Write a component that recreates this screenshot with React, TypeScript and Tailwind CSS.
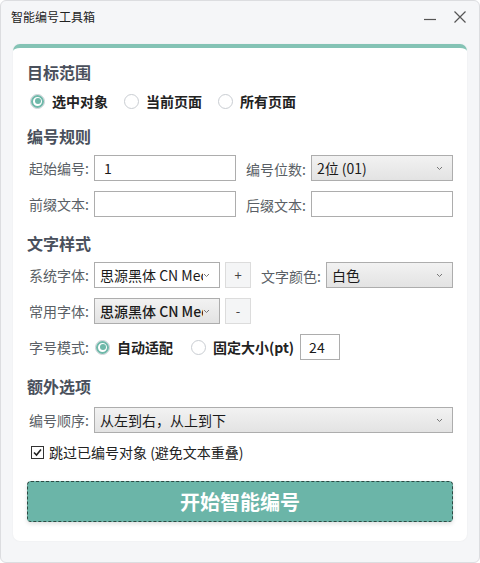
import React from "react";

const font = { fontFamily: '"Noto Sans CJK SC", "Noto Sans", sans-serif' };

function Radio({ checked }: { checked?: boolean }) {
  return (
    <span className="w-[15px] h-[15px] rounded-full border border-[#c9cdd2] bg-white flex items-center justify-center shrink-0">
      {checked && <span className="w-[13px] h-[13px] rounded-full border-[2px] border-[#6fb8a9] flex items-center justify-center"><span className="w-[6px] h-[6px] rounded-full bg-[#6fb8a9]" /></span>}
    </span>
  );
}

function Chevron() {
  return (
    <svg width="7" height="5" viewBox="0 0 7 5" className="shrink-0">
      <path d="M1 1 L3.5 3.5 L6 1" stroke="#777" strokeWidth="1" fill="none" />
    </svg>
  );
}

function Select({ text, w, gray, bold }: { text: string; w: string; gray?: boolean; bold?: boolean }) {
  return (
    <div className={`${w} h-[26px] border border-[#adadad] ${gray ? "bg-gradient-to-b from-[#f2f2f2] to-[#e3e3e3]" : "bg-white"} flex items-center pl-[5px] pr-[9px] overflow-hidden shrink-0`}>
      <span className={`flex-1 whitespace-nowrap overflow-hidden text-[14px] text-[#1a1a1a] ${bold ? "font-medium" : ""}`}>{text}</span>
      <Chevron />
    </div>
  );
}

function Label({ children }: { children: React.ReactNode }) {
  return <span className="w-[60px] text-[14px] text-[#5a5f66] whitespace-nowrap shrink-0">{children}</span>;
}

function Heading({ children }: { children: React.ReactNode }) {
  return <div className="text-[16px] font-semibold text-[#4a505c] leading-[20px]">{children}</div>;
}

function RLabel({ children }: { children: React.ReactNode }) {
  return <span className="ml-[7px] text-[14px] font-bold text-[#222] whitespace-nowrap">{children}</span>;
}

export default function App() {
  return (
    <div style={font} className="w-[480px] h-[563px] bg-white">
      <div className="w-[480px] h-[563px] bg-[#f5f6f8] border border-[#dcdde0] rounded-[6px] flex flex-col">
        <div className="h-[32px] flex items-center pl-[10px] pr-[12px]">
          <span className="text-[12px] text-[#222]">智能编号工具箱</span>
          <div className="flex-1" />
          <svg width="14" height="14" viewBox="0 0 14 14" className="mr-[16px]"><path d="M1 9.5 H13" stroke="#555" strokeWidth="1.2" /></svg>
          <svg width="14" height="14" viewBox="0 0 14 14"><path d="M1.5 1.5 L12.5 12.5 M12.5 1.5 L1.5 12.5" stroke="#555" strokeWidth="1.2" /></svg>
        </div>
        <div className="mx-[12px] mt-[11px] bg-white rounded-[7px] border-t-[4px] border-[#84c3b5] shadow-[0_0_2px_rgba(0,0,0,0.06)] px-[14px] pt-[14px] pb-[19px] flex flex-col">
          <Heading>目标范围</Heading>
          <div className="flex items-center mt-[10px] h-[18px] pl-[3px]">
            <Radio checked />
            <RLabel>选中对象</RLabel>
            <span className="ml-[16px]"><Radio /></span>
            <RLabel>当前页面</RLabel>
            <span className="ml-[16px]"><Radio /></span>
            <RLabel>所有页面</RLabel>
          </div>
          <div className="mt-[16px]"><Heading>编号规则</Heading></div>
          <div className="mt-[9px] flex items-center h-[26px] pl-[2px]">
            <Label>起始编号:</Label>
            <div className="ml-[5px] w-[142px] h-[26px] border border-[#adadad] flex items-center px-[9px] text-[14px] text-[#1a1a1a] shrink-0">1</div>
            <span className="ml-[10px]"><Label>编号位数:</Label></span>
            <div className="ml-[5px]"><Select text="2位 (01)" w="w-[142px]" gray /></div>
          </div>
          <div className="mt-[10px] flex items-center h-[26px] pl-[2px]">
            <Label>前缀文本:</Label>
            <div className="ml-[5px] w-[142px] h-[26px] border border-[#adadad] shrink-0" />
            <span className="ml-[10px]"><Label>后缀文本:</Label></span>
            <div className="ml-[5px] w-[142px] h-[26px] border border-[#adadad] shrink-0" />
          </div>
          <div className="mt-[16px]"><Heading>文字样式</Heading></div>
          <div className="mt-[9px] flex items-center h-[26px] pl-[2px]">
            <Label>系统字体:</Label>
            <div className="ml-[5px]"><Select text="思源黑体 CN Medium" w="w-[126px]" /></div>
            <div className="ml-[5px] w-[26px] h-[26px] border border-[#dcdcdc] bg-[#f4f5f6] flex items-center justify-center text-[13px] text-[#444] shrink-0">+</div>
            <span className="ml-[10px]"><Label>文字颜色:</Label></span>
            <div className="ml-[5px]"><Select text="白色" w="w-[127px]" gray /></div>
          </div>
          <div className="mt-[10px] flex items-center h-[26px] pl-[2px]">
            <Label>常用字体:</Label>
            <div className="ml-[5px]"><Select text="思源黑体 CN Medium" w="w-[126px]" gray bold /></div>
            <div className="ml-[5px] w-[26px] h-[26px] border border-[#dcdcdc] bg-[#f4f5f6] flex items-center justify-center text-[13px] text-[#444] shrink-0">-</div>
          </div>
          <div className="mt-[10px] flex items-center h-[26px] pl-[2px]">
            <Label>字号模式:</Label>
            <span className="ml-[6px]"><Radio checked /></span>
            <RLabel>自动适配</RLabel>
            <span className="ml-[18px]"><Radio /></span>
            <RLabel>固定大小(pt)</RLabel>
            <div className="ml-[6px] w-[40px] h-[26px] border border-[#adadad] flex items-center px-[8px] text-[14px] text-[#1a1a1a] shrink-0">24</div>
          </div>
          <div className="mt-[16px]"><Heading>额外选项</Heading></div>
          <div className="mt-[11px] flex items-center h-[26px] pl-[2px]">
            <Label>编号顺序:</Label>
            <div className="ml-[5px]"><Select text="从左到右，从上到下" w="w-[359px]" gray /></div>
          </div>
          <div className="mt-[8px] flex items-center h-[22px] pl-[4px]">
            <span className="w-[13px] h-[13px] border border-[#333] bg-white flex items-center justify-center">
              <svg width="11" height="11" viewBox="0 0 11 11"><path d="M2 5.5 L4.5 8 L9 2.5" stroke="#222" strokeWidth="1.6" fill="none" /></svg>
            </span>
            <span className="ml-[5px] text-[14px] text-[#222]">跳过已编号对象 (避免文本重叠)</span>
          </div>
          <div className="mt-[18px] h-[41px] rounded-[4px] bg-[#6bb5a8] border border-dashed border-[#2d4a44] shadow-[0_2px_4px_rgba(0,0,0,0.12)] flex items-center justify-center">
            <span className="text-[20px] font-bold text-white">开始智能编号</span>
          </div>
        </div>
      </div>
    </div>
  );
}
